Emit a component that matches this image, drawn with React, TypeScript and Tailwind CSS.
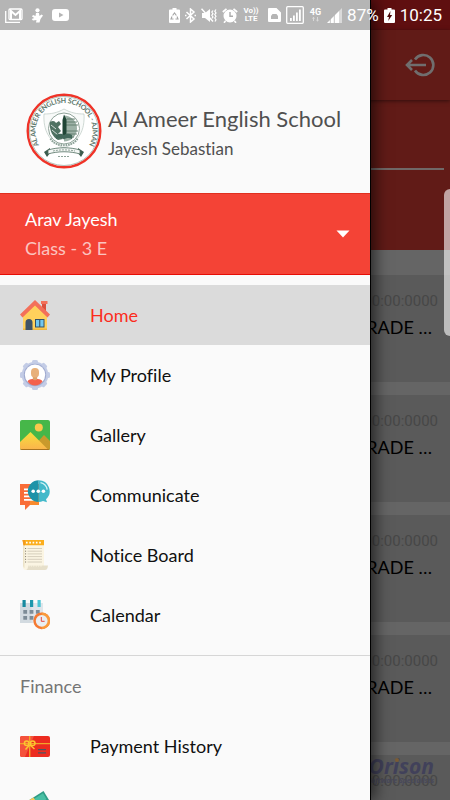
import type { ReactNode } from "react";

const HomeIcon = () => (
  <svg viewBox="0 0 30 30" className="size-[30px]">
    <path d="M22 9V3h4v10z" fill="#d9503f" />
    <path d="M21 1h6.500v3H21z" fill="#f3705a" />
    <path d="M3 15 15 4l12 11v15H3z" fill="#ffd15c" />
    <path d="M3 28.500h24V30H3z" fill="#f0b840" />
    <path d="M15 0 30 14.500 27.500 17.500 15 5.500 2.500 17.500 0 14.500z" fill="#f3705a" />
    <path d="M5.500 30v-7.500a3.500 3.500 0 0 1 7 0V30z" fill="#3f5366" />
    <path d="M15 19h9.500v8.500H15z" fill="#345065" />
    <path d="M16 20h3.200v6.500H16zM20.300 20h3.200v6.500h-3.200z" fill="#72c8f0" />
  </svg>
);

const ProfileIcon = () => (
  <svg viewBox="0 0 30 30" className="size-[30px]">
    <g fill="#c3cce6">
      <circle cx="15" cy="15" r="13.300" />
      <rect x="12" width="6" height="30" rx="1.500" />
      <rect x="12" width="6" height="30" rx="1.500" transform="rotate(45 15 15)" />
      <rect x="12" width="6" height="30" rx="1.500" transform="rotate(90 15 15)" />
      <rect x="12" width="6" height="30" rx="1.500" transform="rotate(135 15 15)" />
    </g>
    <circle cx="15" cy="15" r="11.200" fill="#a0abd0" />
    <circle cx="15" cy="14.800" r="10.200" fill="#fff" />
    <path d="M7.500 21.500c.5-1.500 2.500-2.300 5-2.500h5c2.500.2 4.500 1 5 2.500-1.800 2.500-4.500 3.900-7.500 3.900s-5.700-1.400-7.500-3.900z" fill="#f4604c" />
    <path d="M12.800 16h4.400v3.400c-1 1-3.400 1-4.400 0z" fill="#dca06a" />
    <rect x="11" y="8" width="8" height="9.500" rx="3.800" fill="#e8b07a" />
  </svg>
);

const GalleryIcon = () => (
  <svg viewBox="0 0 30 30" className="size-[30px]">
    <defs>
      <linearGradient id="hill" x1="0" y1="0" x2="0" y2="1">
        <stop offset="0" stopColor="#f7e03c" />
        <stop offset="1" stopColor="#fbb34c" />
      </linearGradient>
      <clipPath id="frame"><rect width="30" height="30" rx="2" /></clipPath>
    </defs>
    <g clipPath="url(#frame)">
      <path d="M0 0h30v30H0z" fill="#46b749" />
      <circle cx="18.800" cy="7.600" r="4" fill="#fbc84c" />
      <path d="M18 21.500 24 15l6 6v9H18z" fill="#c99a2c" />
      <path d="M0 22 10.500 12 28.500 30H0z" fill="url(#hill)" />
      <path d="M0 29h30v1H0z" fill="#a87320" />
    </g>
  </svg>
);

const CommunicateIcon = () => (
  <svg viewBox="0 0 30 30" className="size-[30px]">
    <path d="M0 4h19v21h-9l-5 5v-5H0z" fill="#f96c37" />
    <path d="M10 15h9v10h-9z" fill="#f98a2c" />
    <path d="M4 8.500h8v1.800H4zM4 12h8v1.800H4zM4 15.500h10v1.800H4zM4 19h13v1.800H4z" fill="#fff" />
    <path d="M18.700.2v21.800a10.900 10.900 0 0 1 0-21.800z" fill="#1d93a8" />
    <path d="M18.700.2a10.900 10.900 0 0 1 7.300 19l1 3-4-1.100a11 11 0 0 1-4.300.9z" fill="#43b9ca" />
    <path d="M20.500 2.700a8.600 8.600 0 0 1 6.700 7" fill="none" stroke="#d5f2f6" strokeWidth="1.300" />
    <g fill="#fff">
      <circle cx="13.200" cy="11.200" r="1.800" />
      <circle cx="18.300" cy="11.200" r="1.800" />
      <circle cx="23.400" cy="11.200" r="1.800" />
    </g>
  </svg>
);

const NoticeIcon = () => (
  <svg viewBox="0 0 30 30" className="size-[30px]">
    <path d="M3 2h21v25.500l-14 2.500H6a3 3 0 0 1-3-3z" fill="#fbf5e3" />
    <path d="M3 5h1.500v23A3 3 0 0 1 3 26z" fill="#ece3c8" />
    <path d="M2.500 0H24v5.200H3.500z" fill="#fcae1c" />
    <path d="M2.500 0H5v5.200H3.500z" fill="#f39a1d" />
    <path d="M8 25.500h20c-.2 2.700-1 4.500-3 4.500H5.500c2 0 2.600-2 2.500-4.500z" fill="#e6dfca" />
    <path d="M8 25.500l1 1.200 1.200-1.200 1.200 1.200 1.200-1.200 1.200 1.200 1.200-1.200 1.200 1.200 1.200-1.200 1.200 1.200 1.200-1.200 1.200 1.200 1.200-1.200z" fill="#fbf5e3" />
    <path d="M6 2.600h15.500" stroke="#fff" strokeWidth="1.600" strokeDasharray="1.600 1.700" />
    <path d="M7.500 8.500H22M7.500 11.200H22M7.500 13.900H22M7.500 16.600H22M7.500 19.300H22M7.500 22H22" stroke="#cbc4b2" strokeWidth=".8" />
    <path d="M5.600 8v14.500" stroke="#77705f" strokeWidth="1" strokeDasharray="1 1.700" />
  </svg>
);

const CalendarIcon = () => (
  <svg viewBox="0 0 30 30" className="size-[30px]">
    <path d="M0 3h23v20H0z" fill="#dfe5ea" />
    <path d="M0 3h11.500v20H0z" fill="#d2dae0" />
    <path d="M2.500 0h3.200v7H2.500z" fill="#178aa0" />
    <path d="M10 0h3.200v7H10z" fill="#1d97ac" />
    <path d="M17.500 0h3.200v7h-3.200z" fill="#4ac4d4" />
    <g fill="#7d8c97">
      <path d="M3.300 10h3.800v3.700H3.300zM9.600 10h3.800v3.700H9.600zM15.900 10h3.800v3.700h-3.800zM3.300 16h3.800v3.700H3.300zM9.600 16h3.800v3.700H9.600z" />
    </g>
    <circle cx="21.700" cy="20.800" r="8.400" fill="#f47a33" />
    <path d="M21.700 12.400a8.400 8.400 0 0 1 0 16.800z" fill="#f99a3c" />
    <circle cx="21.700" cy="20.800" r="5.900" fill="#e9eef2" />
    <path d="M21.300 17v4.300h3.300" fill="none" stroke="#e8453c" strokeWidth="1" />
  </svg>
);

const GiftCardIcon = () => (
  <svg viewBox="0 0 30 21" className="h-[21px] w-[30px]">
    <rect width="30" height="21" rx="2" fill="#ec2b20" />
    <path d="M2 0h12L5 21H2a2 2 0 0 1-2-2V2a2 2 0 0 1 2-2z" fill="#f4523b" />
    <path d="M0 7h30v1.300H0zM9 0h1.400v21H9z" fill="#f2a42a" />
    <g fill="none" stroke="#fcc52f" strokeWidth="1.500">
      <circle cx="6.700" cy="7.300" r="2.300" />
      <circle cx="12.700" cy="7.300" r="2.300" />
      <path d="M9.500 9 5.500 13.500M10 9l4.500 4" />
    </g>
    <path d="M18 13h8v1.300h-8zM18 16.200h8v1.300h-8z" fill="#4e5560" />
  </svg>
);

const CashIcon = () => (
  <svg viewBox="0 0 30 30" className="size-[30px]">
    <path d="M3 13 23.500 0 29 9 9 22z" fill="#2f9c86" />
    <path d="M5.500 13.200 23 2.200l3.500 6-17.500 11z" fill="#48c0a4" />
    <path d="M8 9.800 13.500 6.400 19 15l-5 3.200z" fill="#fcc95a" />
    <path d="M0 14h27v14H0z" fill="#48c0a4" />
  </svg>
);

const MENU: { label: string; icon: ReactNode; active?: boolean }[] = [
  { label: "Home",         icon: <HomeIcon />, active: true },
  { label: "My Profile",   icon: <ProfileIcon /> },
  { label: "Gallery",      icon: <GalleryIcon /> },
  { label: "Communicate",  icon: <CommunicateIcon /> },
  { label: "Notice Board", icon: <NoticeIcon /> },
  { label: "Calendar",     icon: <CalendarIcon /> },
];

const FINANCE: { label: string; icon: ReactNode; active?: boolean }[] = [
  { label: "Payment History", icon: <GiftCardIcon /> },
  { label: "Fee Record",      icon: <CashIcon /> },
];

function MenuRow({ label, icon, active }: { label: string; icon: ReactNode; active?: boolean }) {
  return (
    <a
      href="#"
      className={`flex h-[60px] items-center gap-10 px-5 text-lg ${
        active ? "bg-[#dbdbdb] text-[#fb2c1d]" : "text-[#101010]"
      }`}
    >
      {icon}
      {label}
    </a>
  );
}

function StatusBar() {
  return (
    <div className="absolute inset-x-0 top-0 z-20 flex h-[30px] items-center justify-between pr-2 pl-[5px] text-white">
      <div className="flex items-center gap-2">
        <svg viewBox="0 0 18 15" className="h-[15px] w-[18px]" fill="none" stroke="#fff">
          <path d="M.7 3v11.300H15" strokeWidth="1.300" />
          <rect x="4" y="1" width="13" height="10.500" rx="1" strokeWidth="1.300" />
          <path d="M6 11V3l4.500 4L15 3v8" strokeWidth="2" />
        </svg>
        <svg viewBox="0 0 13 15" className="h-[15px] w-[13px]" fill="#fff">
          <circle cx="6.500" cy="2.300" r="2.100" />
          <path d="M5 5h3l.5 3 2-1.500 1.500 1-2.500 3.500-1 3.500H5l.5-2.500L2 12.500.7 11l2.500-1L1 8.500 2 7l2.500 1z" />
        </svg>
        <svg viewBox="0 0 17 12" className="h-3 w-[17px]">
          <path fill="#fff" fillRule="evenodd" d="M3 0h11a3 3 0 0 1 3 3v6a3 3 0 0 1-3 3H3a3 3 0 0 1-3-3V3a3 3 0 0 1 3-3zm4 3.500v5L11.500 6z" />
        </svg>
      </div>

      <div className="flex items-center gap-[5px]">
        <svg viewBox="0 0 11 15" className="h-[15px] w-[11px]">
          <path fill="#fff" d="M3.500 0h4v1.500H10a1 1 0 0 1 1 1V14a1 1 0 0 1-1 1H1a1 1 0 0 1-1-1V2.500a1 1 0 0 1 1-1h2.500z" />
          <path d="M3.600 7.500 5.500 5l1.900 2.500M8 8.500 9 11H6.500M4.500 11H2l1-2.500" fill="none" stroke="#a5a5a5" strokeWidth="1.100" />
        </svg>
        <svg viewBox="0 0 11 15" className="h-[15px] w-[11px]" fill="none" stroke="#fff" strokeWidth="1.500">
          <path d="M1.500 4 9 11l-3.500 3V1L9 4l-7.500 7" />
          <path d="M9.500 7.500h1.500M0 7.500h1.500" />
        </svg>
        <svg viewBox="0 0 16 15" className="h-[15px] w-4">
          <path d="M1 5h3l5-4v13l-5-4H1z" fill="#fff" />
          <path d="M.5.800 12 13.500" stroke="#fff" strokeWidth="1.500" />
          <path d="M12 2.500l-1.200 1.600L12 5.700l-1.200 1.600L12 8.900l-1.200 1.600M15 1.500l-1.200 1.700L15 4.900l-1.200 1.700L15 8.300 13.800 10l1.200 1.700-1 1.800" fill="none" stroke="#fff" strokeWidth="1.200" />
        </svg>
        <svg viewBox="0 0 16 15" className="h-[15px] w-4">
          <path d="M4.500.800.800 4M11.500.800 15.200 4M3.500 13 2 14.700M12.500 13l1.500 1.700" stroke="#fff" strokeWidth="1.700" />
          <circle cx="8" cy="8" r="6.500" fill="#fff" />
          <path d="M8 4v4.300h3" fill="none" stroke="#acacac" strokeWidth="1.400" />
        </svg>
        <span className="flex w-4 flex-col items-center text-[8px] leading-[8px] font-bold">
          <span>Vo))</span>
          <span>LTE</span>
        </span>
        <svg viewBox="0 0 13 14" className="ml-1 h-[14px] w-[13px]">
          <path fill="#fff" fillRule="evenodd" d="M1 0h7.500L13 4.500V13a1 1 0 0 1-1 1H1a1 1 0 0 1-1-1V1a1 1 0 0 1 1-1zm2 11h7V8L8.500 6h-4L3 8z" />
        </svg>
        <svg viewBox="0 0 18 18" className="size-[18px]">
          <rect x=".7" y=".7" width="16.600" height="16.600" rx="1" fill="none" stroke="#fff" strokeWidth="1.300" />
          <path d="M4 12h1.800v3H4zM7 9.500h1.800V15H7zM10 6.500h1.800V15H10zM13 3.500h1.800V15H13z" fill="#fff" />
        </svg>
        <svg viewBox="0 0 13 18" className="h-[18px] w-[13px]">
          <text x="6.500" y="9" textAnchor="middle" fill="#fff" fontSize="9" fontWeight="700">4G</text>
          <path d="M4.500 11v4M8.500 11v4" stroke="#d8d8d8" strokeWidth="1" />
          <path d="M3 12.800 4.500 10.800 6 12.800zM7 13.700l1.500 2 1.500-2z" fill="#d8d8d8" />
        </svg>
        <svg viewBox="0 0 15 15" className="h-[15px] w-[15px]" fill="#fff">
          <path d="M0 15 12 3v12z" />
          <path d="M12 3 15 0v15h-3z" opacity=".5" />
          <path d="M3.300 10v5M7.300 6v9" stroke="#b5b5b5" strokeWidth=".8" />
        </svg>
        <span className="text-[17px] leading-none">87%</span>
        <svg viewBox="0 0 11 15" className="h-[15px] w-[11px]">
          <path fill="#fff" d="M3.500 0h4v1.500H10a1 1 0 0 1 1 1V14a1 1 0 0 1-1 1H1a1 1 0 0 1-1-1V2.500a1 1 0 0 1 1-1h2.500z" />
          <path d="M6.500 3 3 9h2l-.8 4L8.200 7H6z" fill="#4d0a0a" />
        </svg>
        <span className="text-[17px] leading-none">10:25</span>
      </div>
    </div>
  );
}

function SchoolCrest() {
  return (
    <svg viewBox="0 0 76 76" className="size-[76px] shrink-0">
      <defs>
        <path id="ring" d="M17 60.500A30.500 30.500 0 1 1 59 60.500" />
      </defs>
      <circle cx="38" cy="38" r="36.300" fill="#fff" stroke="#ef3328" strokeWidth="2.400" />
      <circle cx="38" cy="38" r="34.500" fill="none" stroke="#9fb3aa" strokeWidth=".8" />
      <text fill="#5d776b" fontSize="7" fontWeight="700" dy="2">
        <textPath href="#ring" startOffset="50%" textAnchor="middle">AL AMEER ENGLISH SCHOOL - AJMAN</textPath>
      </text>
      <path d="M18 21c7 0 13-1 20-5 7 4 13 5 20 5 1 16-5 28-20 34C23 49 17 37 18 21z" fill="#f8faf9" stroke="#c3cfc9" strokeWidth=".8" />
      <circle cx="38" cy="35.500" r="15.500" fill="#fff" stroke="#8fa399" strokeWidth="1" />
      <path d="M38 22.500a13 13 0 0 1 0 26z" fill="#9db2a7" />
      <path d="M41 26h8M40 29h11M40 32h12M40 38h12M41 41h10M40 44h8" stroke="#5d7a6c" strokeWidth=".9" />
      <path d="M24 29c3-2 5-1 6 1l3-2 2 3-3 3 3 4-3 3 5 5-5 1c-5-3-9-9-8-18z" fill="#4f7262" />
      <path d="M25 32l5 4M26 37l6 5" stroke="#dfe7e3" strokeWidth=".9" />
      <path d="M38 21.500l2.500 5V42h-4V27z" fill="#1f4535" />
      <path d="M30 42c3-2 6-1.500 8 0 2-1.500 5-2 8 0v4c-3-1.500-6-1-8 .5-2-1.500-5-2-8-.5z" fill="#42685a" />
      <path d="M24.500 45.500c4 9 23 9 27 0" fill="none" stroke="#8ba197" strokeWidth="2" strokeDasharray="1.500 1" />
      <path d="M18 59l6-4v5l-3 4zM58 59l-6-4v5l3 4z" fill="#3c5c4e" />
      <path d="M22 57c10-3 22-3 32 0v4c-10-3-22-3-32 0z" fill="#f5f8f6" stroke="#4f6d60" strokeWidth=".8" />
      <path d="M27 58c7-1.500 15-1.500 22 0M32 63.500h12" stroke="#8fa399" strokeWidth="1" strokeDasharray="2 1" fill="none" />
    </svg>
  );
}

function Drawer() {
  return (
    <aside className="absolute inset-y-0 right-20 left-0 z-10 -mr-px overflow-hidden border-r border-black bg-[#fafafa] shadow-[4px_0_14px_rgba(0,0,0,0.6)]">
      <div className="h-[30px] bg-[#b5b5b5]" />
      <div className="flex h-[163px] items-center gap-[6px] pt-[38px] pl-[26px]">
        <SchoolCrest />
        <div className="pt-1 whitespace-nowrap text-[#505050]">
          <h1 className="text-[22px] leading-8">Al Ameer English School</h1>
          <p className="text-[17px] leading-7">Jayesh Sebastian</p>
        </div>
      </div>

      <button
        type="button"
        className="flex w-full items-center justify-between border-t border-b border-t-[#e0301f] border-b-[#e60d05] bg-[#f44336] py-[11px] pr-5 pl-[25px] text-left text-white"
      >
        <span className="flex flex-col text-lg leading-[29px]">
          <span>Arav Jayesh</span>
          <span className="text-white/70">Class - 3 E</span>
        </span>
        <svg viewBox="0 0 14 8" className="h-2 w-[14px]">
          <path d="M.5.500h13L7 7.500z" fill="#fff" />
        </svg>
      </button>

      <nav>
        <div className="py-[10px]">
          {MENU.map((m) => <MenuRow key={m.label} {...m} />)}
        </div>
        <div className="border-t border-[#d6d6d6]">
          <h2 className="px-5 text-lg leading-[60px] text-[#757575]">Finance</h2>
          {FINANCE.map((m) => <MenuRow key={m.label} {...m} />)}
        </div>
      </nav>
    </aside>
  );
}

// Dashboard behind the drawer, colours already dimmed by the scrim
function Dashboard() {
  return (
    <main className="flex flex-col bg-[#656565]">
      <div className="h-[30px] bg-[#5f0f10]" />
      <header className="relative flex h-[70px] items-center justify-end bg-[#611b17] px-[14px] shadow-[0_1px_4px_rgba(0,0,0,0.5)]">
        <button type="button" aria-label="Log out">
          <svg viewBox="0 0 32 24" className="h-6 w-8" fill="none" stroke="#706e6e" strokeWidth="2.600">
            <path d="M11 6.500a10 10 0 1 1 0 11" />
            <path d="M22 12H3M8 7l-5 5 5 5" />
          </svg>
        </button>
      </header>
      <section className="h-[150px] bg-[#611b17] pt-[68px] pr-[6px]">
        <div className="border-t-2 border-[#706867]" />
      </section>
      <ul className="flex flex-col gap-[13px] pt-[25px]">
        {[0, 1, 2, 3, 4].map((n) => (
          <li key={n} className="flex h-[107px] flex-col items-end bg-[#5a5a5a] pt-[14px]">
            <time className="pr-3 font-[Roboto,sans-serif] text-[15px] leading-6 text-[#474747]">00:00:0000</time>
            <p className="pr-[18px] text-lg leading-7 text-black">GRADE …</p>
          </li>
        ))}
      </ul>
    </main>
  );
}

export default function App() {
  return (
    <div className="relative h-screen overflow-hidden font-[Lato,'Open_Sans',sans-serif] [font-variant-ligatures:none]">
      <Dashboard />
      <div className="absolute right-4 bottom-4 flex flex-col items-end font-['Noto_Sans',sans-serif] font-bold text-[#41415a] italic">
        <span className="relative text-[21px] leading-6">
          Orison
          <span className="absolute top-1 right-[35px] size-1 rounded-full bg-[#7a5c34]" />
        </span>
        <span className="text-[7px] leading-[6px] text-[#48485a]">Software Specialists</span>
      </div>
      <Drawer />
      <div className="absolute top-[189px] right-0 h-[147px] w-[6px] rounded-l-md bg-white/60" />
      <div className="font-[Roboto,sans-serif]">
        <StatusBar />
      </div>
    </div>
  );
}
